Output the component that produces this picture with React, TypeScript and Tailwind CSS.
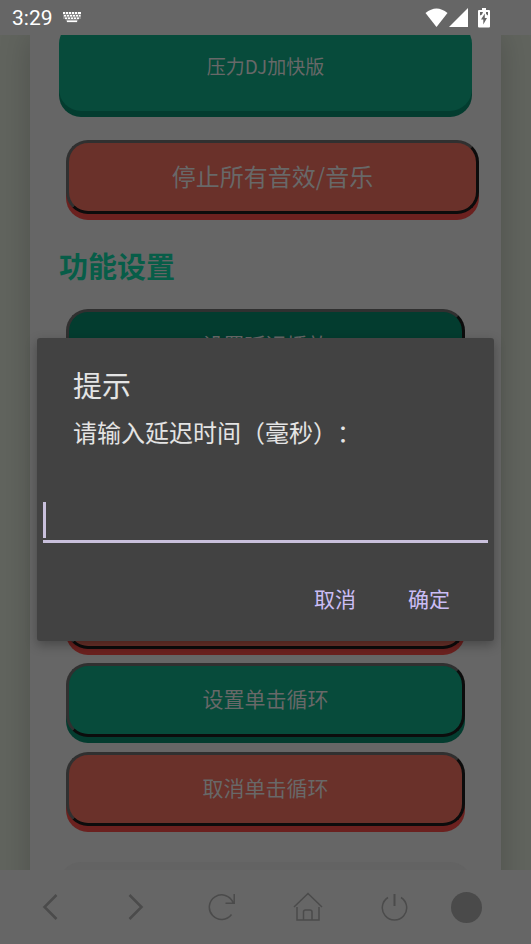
import React from "react";

type Tone = "green" | "pressed" | "red";

const toneClass: Record<Tone, string> = {
  green: "bg-[#074b3b] shadow-[0_6px_0_#033c2f]",
  pressed: "bg-[#033c2f] shadow-[0_6px_0_#033c2f]",
  red: "bg-[#6a312a] shadow-[0_6px_0_#6b211f]",
};

function OutsetButton({ tone, large, children }: { tone: Tone; large?: boolean; children: React.ReactNode }) {
  return (
    <button
      type="button"
      className={`block h-[74px] w-full rounded-[22px] border-[3px] border-t-[#303030] border-r-[#0c0c0c] border-b-[#0c0c0c] border-l-[#303030] pb-0.5 text-[#686868] ${large ? "text-[24px]" : "text-[21px]"} ${toneClass[tone]}`}
    >
      {children}
    </button>
  );
}

function StatusBar() {
  return (
    <header className="flex h-[35px] shrink-0 items-center bg-[#666666] pr-[41px] pl-3 text-white">
      <span className="pt-0.5 font-[Roboto,sans-serif] text-[21px] leading-none">3:29</span>
      <svg className="ml-[10px]" width="18" height="11" viewBox="0 0 18 11" fill="currentColor" aria-hidden="true">
        <path d="M0 0h18v7h-2l-2 3.500H4L2 7H0z" fillOpacity=".25" />
        <path d="M0 0h2v2H0zM3 0h2v2H3zM6 0h2v2H6zM9 0h2v2H9zM12 0h2v2h-2zM15 0h3v2h-3zM1 3h2v1.500H1zM4 3h2v1.500H4zM7 3h2v1.500H7zM10 3h2v1.500h-2zM13 3h2v1.500h-2zM16 3h1.500v1.500H16zM2 5.500h2V7H2zM5 5.500h2V7H5zM8 5.500h2V7H8zM11 5.500h2V7h-2zM14 5.500h2V7h-2zM4 8.500h10V10H4z" />
      </svg>
      <svg className="ml-auto" width="23" height="19" viewBox="0 0 23 19" fill="currentColor" aria-hidden="true">
        <path d="M0.500 5Q11.500-4 22.500 5L11.500 19z" />
      </svg>
      <svg className="ml-px" width="19" height="19" viewBox="0 0 19 19" fill="currentColor" aria-hidden="true">
        <path d="M19 0v19H0z" />
      </svg>
      <svg className="ml-[10px]" width="12" height="20" viewBox="0 0 12 20" fill="currentColor" aria-hidden="true">
        <path
          fillRule="evenodd"
          d="M4 0h4v2h3q1 0 1 1v15.500q0 1-1 1H1q-1 0-1-1V3q0-1 1-1h3zM6.800 5.500L3 11.500h2.300V16.500L9 10H6.800zM2 4h3L4 6.500 2 7.500zM10 4H8v2l2 1.500z"
        />
      </svg>
    </header>
  );
}

const stroke = { fill: "none", stroke: "currentColor", strokeWidth: 1.5 };

function NavBar() {
  const item = "flex h-full flex-[86] items-center justify-center";
  return (
    <nav className="flex h-[74px] shrink-0 items-center bg-[#666666] pr-9 pl-[7px] text-[#4b4b4b]">
      <button type="button" aria-label="后退" className={item}>
        <svg width="28" height="28" viewBox="0 0 28 28" {...stroke} strokeWidth={2.5}>
          <path d="M20.500 2L8.500 14l12 12" />
        </svg>
      </button>
      <button type="button" aria-label="前进" className={item}>
        <svg width="28" height="28" viewBox="0 0 28 28" {...stroke} strokeWidth={2.5}>
          <path d="M7.500 2l12 12-12 12" />
        </svg>
      </button>
      <button type="button" aria-label="刷新" className={item}>
        <svg width="28" height="28" viewBox="0 0 28 28" {...stroke}>
          <path d="M23.500 21.500A12.300 12.300 0 1 1 25 9.500M26.200 1v9.200H17.500" />
        </svg>
      </button>
      <button type="button" aria-label="主页" className={item}>
        <svg width="30" height="30" viewBox="0 0 30 30" {...stroke}>
          <path d="M1 15L15 1.500 29 15M4 15v13h22V15M10.500 28V20q0-2 2-2h4.500q2 0 2 2v8" />
        </svg>
      </button>
      <button type="button" aria-label="退出" className={item}>
        <svg width="28" height="28" viewBox="0 0 28 28" {...stroke}>
          <path d="M8 4.500A12.200 12.200 0 1 0 21 4.500" />
          <path d="M14.500 1v12" strokeWidth={2} />
        </svg>
      </button>
      <button type="button" aria-label="菜单" className="flex h-full flex-[58] items-center justify-center">
        <span className="size-[31px] rounded-full bg-[#4a4a4a]" />
      </button>
    </nav>
  );
}

function PromptDialog() {
  return (
    <div
      role="dialog"
      aria-labelledby="prompt-title"
      className="w-full rounded-[3px] bg-[#424242] pb-[11px] text-[#e4e4e4] shadow-[0_4px_12px_rgba(0,0,0,0.3)]"
    >
      <h1 id="prompt-title" className="px-9 pt-[26px] text-[29px] leading-10">提示</h1>
      <label htmlFor="delay" className="mt-3 block px-9 text-[24px] leading-8 [text-spacing-trim:space-all]">
        请输入延迟时间（毫秒）：
      </label>
      <div className="relative mx-1.5 mt-[50px]">
        <input
          id="delay"
          type="text"
          className="block h-[45px] w-full border-b-[3px] border-[#c9c0dc] bg-transparent text-[24px] caret-transparent outline-none"
        />
        <span className="absolute top-1 left-0 h-9 w-[3px] bg-[#c9c0dc]" />
      </div>
      <div className="mt-[25px] flex justify-end gap-[10px] pr-[23px] text-[21px] text-[#cbbdf6]">
        <button type="button" className="h-[62px] w-[84px]">取消</button>
        <button type="button" className="h-[62px] w-[84px]">确定</button>
      </div>
    </div>
  );
}

export default function App() {
  return (
    <div className="relative flex h-screen flex-col overflow-hidden bg-[#61645e] font-['Noto_Sans_CJK_SC',sans-serif]">
      <StatusBar />
      <main className="min-h-0 flex-1 overflow-hidden">
        <div className="mx-[30px] bg-[#666666] px-[29px] shadow-[0_0_30px_rgba(0,0,0,0.2)]">
          <div className="-translate-y-[13px]">
            <button
              type="button"
              className="block h-[89px] w-full rounded-[22px] bg-[#074b3b] text-[19px] text-[#686868] shadow-[0_6px_0_#033c2f]"
            >
              压力DJ加快版
            </button>
            <div className="mt-[29px] -mr-[7px] ml-[7px]">
              <OutsetButton tone="red" large>停止所有音效/音乐</OutsetButton>
            </div>
            <h2 className="mt-[31px] text-[29px] leading-10 font-bold text-[#075d48]">功能设置</h2>
            <div className="mx-[7px] mt-6 flex flex-col gap-[14px]">
              <div className="flex flex-col gap-[15px]">
                <OutsetButton tone="pressed">设置延迟播放</OutsetButton>
                <OutsetButton tone="red">取消延迟播放</OutsetButton>
              </div>
              <div className="flex flex-col gap-[15px]">
                <OutsetButton tone="green">设置循环播放</OutsetButton>
                <OutsetButton tone="red">取消循环播放</OutsetButton>
              </div>
              <div className="flex flex-col gap-[15px]">
                <OutsetButton tone="green">设置单击循环</OutsetButton>
                <OutsetButton tone="red">取消单击循环</OutsetButton>
              </div>
            </div>
            <section className="mt-9 h-24 rounded-[22px] bg-[#636363]" />
          </div>
        </div>
      </main>
      <NavBar />
      <div className="absolute inset-0 flex items-center px-[37px] pt-[35px]">
        <PromptDialog />
      </div>
    </div>
  );
}
